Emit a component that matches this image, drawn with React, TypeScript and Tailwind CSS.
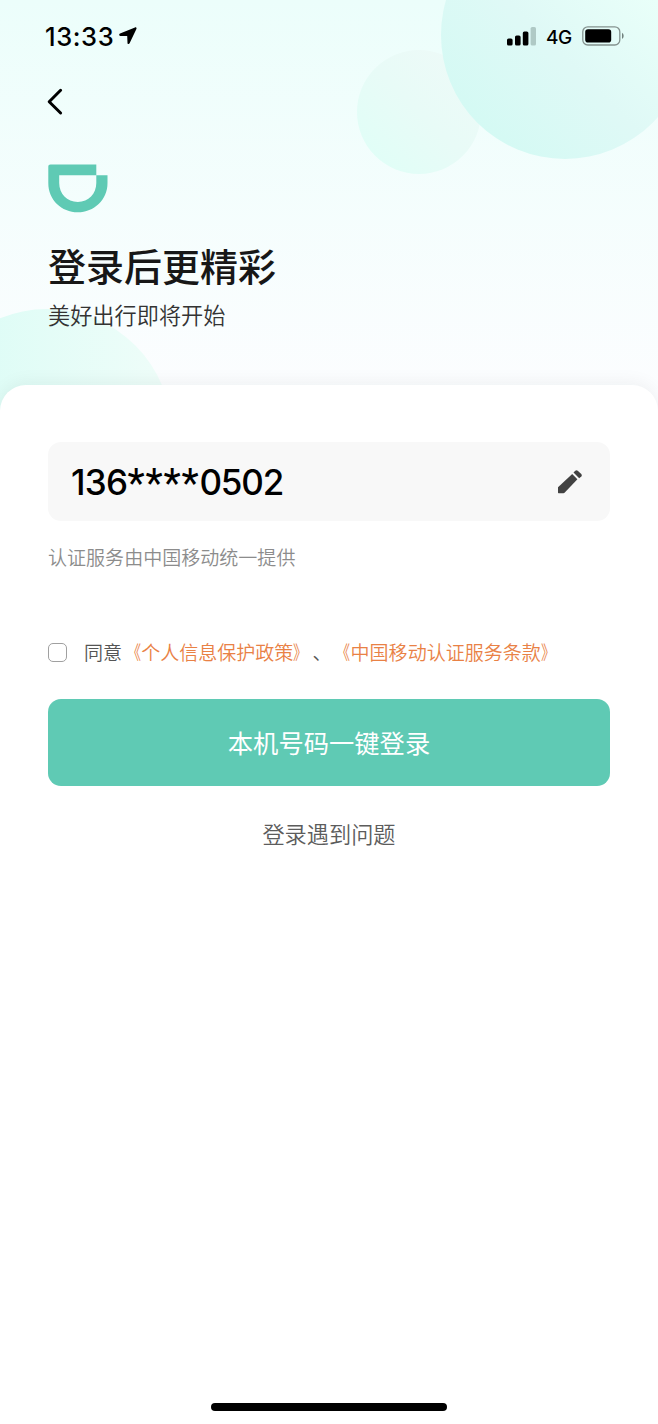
import { useState } from 'react';

function StatusBar() {
  return (
    <div className="flex h-[72px] items-center justify-between pl-[45px] pr-[34px]">
      <div className="flex items-center gap-[6px]">
        <span className="w-[68px] pt-px font-[Inter] text-[25.5px] font-medium leading-[30px] tracking-[0.6px] text-black">13:33</span>
        <svg width="18" height="18" viewBox="0 0 18 18" className="fill-black">
          <path d="M16 0.4 L1 6.5 C-0.2 7 0 8.9 1.3 8.9 L8.2 9.1 L8.5 15.9 C8.6 17.4 10.1 17.5 10.6 16.3 L17.4 2 C17.9 0.9 17 0 16 0.4 Z" />
        </svg>
      </div>
      <div className="flex items-center">
        <svg width="30" height="19" viewBox="0 0 30 19">
          <rect x="0" y="11.5" width="5.6" height="7" rx="1.6" />
          <rect x="8" y="8.5" width="5.6" height="10" rx="1.6" />
          <rect x="15.8" y="4.5" width="5.6" height="14" rx="1.6" />
          <rect x="23.6" y="0" width="5.4" height="18.5" rx="1.6" className="fill-[#afc9c5]" />
        </svg>
        <span className="ml-[9px] w-[27px] pt-[3px] font-[Inter] text-[19px] font-medium leading-6 tracking-[-0.4px] text-black">4G</span>
        <svg width="42" height="20" viewBox="0 0 42 20" className="ml-[9px]">
          <rect x="0.8" y="0.8" width="37" height="18.2" rx="5" fill="none" stroke="#84928f" strokeWidth="1.3" />
          <rect x="3.2" y="3.2" width="26" height="13.4" rx="2.8" />
          <path d="M40 6.8 Q41.7 7.8 41.7 9.9 Q41.7 12 40 13 Z" fill="#71817e" />
        </svg>
      </div>
    </div>
  );
}

// 带窄书名号的协议链接
function PolicyLink({ title }: { title: string }) {
  return (
    <span className="text-[#e98145]">
      <span className="inline-block origin-right scale-x-75">《</span>
      {title}
      <span className="inline-block origin-left scale-x-75">》</span>
    </span>
  );
}

export default function App() {
  const [agreed, setAgreed] = useState(false);

  return (
    <div className="relative h-[1424px] w-[658px] overflow-hidden bg-white font-['Noto_Sans_CJK_SC',sans-serif] [text-spacing-trim:space-all]">
      {/* 顶部背景和装饰圆 */}
      <div className="absolute inset-x-0 top-0 h-[420px] overflow-hidden bg-linear-to-b from-[#ecfefb] to-[#fdfdff]">
        <div className="absolute left-[357px] top-[50px] size-[124px] rounded-full bg-linear-to-tr from-[#defff7] via-[#e8fbf7] to-[#effaf8]" />
        <div className="absolute left-[441px] top-[-89px] size-[248px] rounded-full bg-linear-to-tr from-[#cffaf3] via-[#dff9f6] via-45% to-[#e9fff9] to-75%" />
        <div className="absolute left-[-78px] top-[309px] size-[250px] rounded-full bg-linear-to-r from-[#d8fcf5] to-[#effdf9]" />
      </div>

      <div className="relative flex h-full flex-col">
        <header className="h-[385px] shrink-0">
          <StatusBar />
          <button className="ml-[46px] mt-[16px] block" aria-label="返回">
            <svg width="18" height="28" viewBox="0 0 18 28" fill="none" stroke="black" strokeWidth="3" strokeLinecap="round" strokeLinejoin="round">
              <path d="M14.6 2.3 L3.2 13.8 L14.6 25" />
            </svg>
          </button>
          <svg width="60" height="49" viewBox="0 0 60 49" className="ml-12 mt-12 fill-[#5fcab4]">
            <path d="M2.5 0.4 H48.3 V11.3 H11.2 V19 C11.2 29.5 19 38 29.8 38 C40.6 38 48.3 29.5 48.3 19 V11.3 H59.5 V19 C59.5 36 46 48.3 29.8 48.3 C13.6 48.3 0.3 36 0.3 19 V2.6 C0.3 1.2 1.1 0.4 2.5 0.4 Z" />
          </svg>
          <h1 className="ml-12 mt-[24px] text-[38px] font-medium leading-[56px] text-[#171717]">登录后更精彩</h1>
          <p className="ml-12 mt-[5px] text-[22.2px] font-[350] leading-[32px] text-[#333]">美好出行即将开始</p>
        </header>

        <main className="flex flex-1 flex-col rounded-t-[26px] bg-white px-12 pt-[57px] shadow-[0_-2px_18px_rgba(0,40,40,0.06)]">
          <div className="flex h-[79px] items-center justify-between rounded-[13px] bg-[#f8f8f8] pl-[23px] pr-[27px]">
            <span className="flex items-start pt-[2px] font-[Inter] text-[35px] font-medium leading-[44px] tracking-[-0.7px] text-black">
              136
              <span className="w-[72px] pt-[2px] font-[Roboto] text-[40px] font-normal leading-[44px] tracking-[0.8px]">****</span>
              <span className="tracking-[-1.2px]">0502</span>
            </span>
            <svg width="26" height="26" viewBox="0 0 26 26" className="fill-[#424242]">
              <path d="M1 18.2 L15.2 5 L20.4 10.2 L7.8 23.6 Q7.2 24.2 6.4 24.2 H1.6 Q1 24.2 1 23.6 Z" />
              <path d="M16.5 3.5 L18.3 1.7 Q19.5 0.6 20.7 1.7 L24.3 5 Q25.5 6.2 24.3 7.4 L22.2 9.2 Z" />
            </svg>
          </div>
          <p className="mt-[21px] text-[19.05px] font-[350] leading-[30px] text-[#8c8c8c]">认证服务由中国移动统一提供</p>

          <div className="mt-[65px] flex h-[30px] items-center">
            <button
              role="checkbox"
              aria-checked={agreed}
              aria-label="同意"
              onClick={() => setAgreed(!agreed)}
              className={`size-[19px] shrink-0 rounded-[5px] border ${agreed ? 'border-[#5fcab4] bg-[#5fcab4]' : 'border-[#a0a0a0] bg-white'}`}
            />
            <p className="ml-[17px] whitespace-nowrap text-[19.05px] font-[350] leading-[30px] text-[#555]">
              同意<PolicyLink title="个人信息保护政策" />、<PolicyLink title="中国移动认证服务条款" />
            </p>
          </div>

          <button className="mt-[32px] h-[87px] shrink-0 rounded-[13px] bg-[#5fcab4] pb-[2px] text-[25.3px] leading-[38px] text-white">
            本机号码一键登录
          </button>
          <button className="mt-[30px] self-center text-[22.2px] font-[350] leading-[34px] text-[#5c5c5c]">登录遇到问题</button>

          <div className="mb-[13px] mt-auto h-2 w-[236px] self-center rounded-full bg-black" />
        </main>
      </div>
    </div>
  );
}
